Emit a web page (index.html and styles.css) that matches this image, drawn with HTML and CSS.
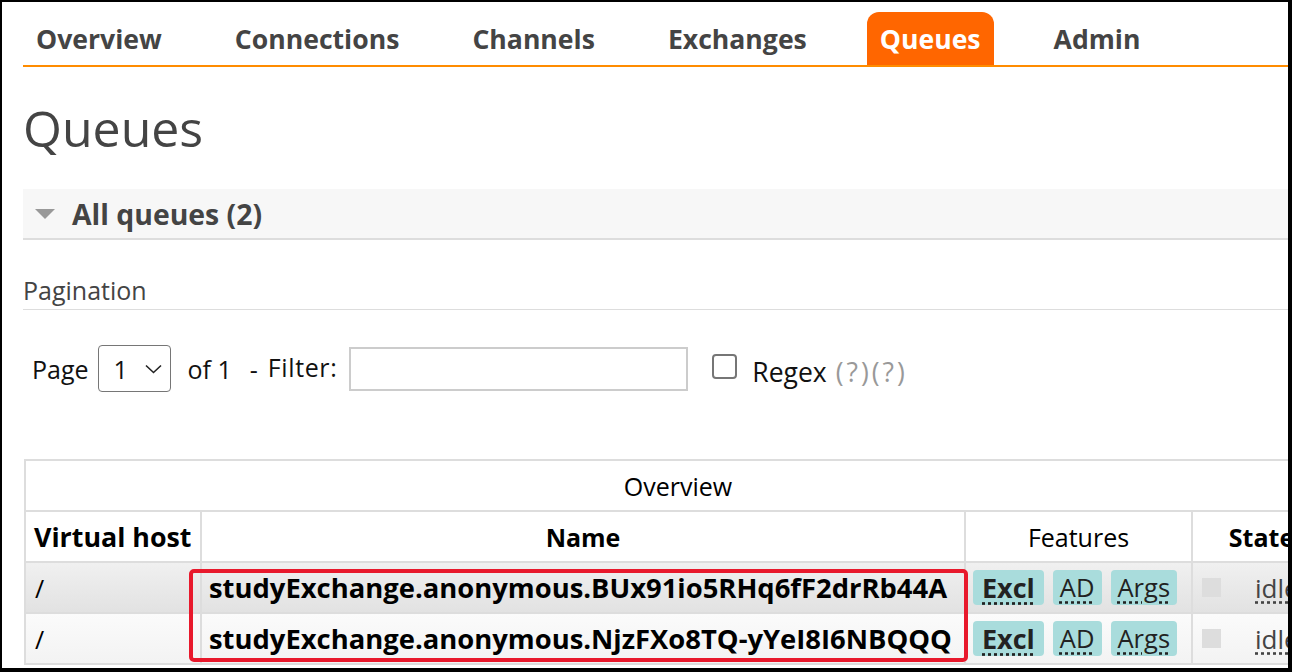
FILE: index.html
```html
<!DOCTYPE html>
<html lang="en">
<head>
<meta charset="utf-8">
<title>Queues</title>
<link rel="stylesheet" href="styles.css">
</head>
<body>
<div class="frame">
  <div class="page">
    <nav class="menu">
      <a class="tab">Overview</a>
      <a class="tab">Connections</a>
      <a class="tab">Channels</a>
      <a class="tab">Exchanges</a>
      <a class="tab active">Queues</a>
      <a class="tab">Admin</a>
    </nav>

    <h1 class="title">Queues</h1>

    <div class="section-head">
      <span class="tri"></span>
      <h2 class="section-title">All queues (2)</h2>
    </div>

    <h3 class="sub">Pagination</h3>

    <div class="pager">
      <span class="lbl">Page</span>
      <div class="select"><span class="sel-val">1</span><svg class="chev" width="17" height="10" viewBox="0 0 17 10"><path d="M1 1.5 L8.5 8.5 L16 1.5" fill="none" stroke="#222" stroke-width="1.6"/></svg></div>
      <span class="lbl of">of 1</span>
      <span class="lbl dash">-</span>
      <span class="lbl filter">Filter:</span>
      <div class="input"></div>
      <span class="checkbox"></span>
      <span class="lbl regex">Regex</span>
      <span class="help">(?)(?)</span>
    </div>

    <table class="list">
      <colgroup>
        <col class="c-vh">
        <col class="c-name">
        <col class="c-feat">
        <col class="c-state">
        <col class="c-more">
      </colgroup>
      <thead>
        <tr class="group">
          <th colspan="4">Overview</th>
          <th>Messages</th>
        </tr>
        <tr class="cols">
          <th class="left">Virtual host</th>
          <th>Name</th>
          <th class="normal">Features</th>
          <th>State</th>
          <th>Ready</th>
        </tr>
      </thead>
      <tbody>
        <tr class="alt1">
          <td>/</td>
          <td class="name">studyExchange.anonymous.BUx91io5RHq6fF2drRb44A</td>
          <td class="feat"><div class="badges"><span class="badge b">Excl</span><span class="badge">AD</span><span class="badge">Args</span></div></td>
          <td><div class="state"><span class="sq"></span><span class="idle">idle</span></div></td>
          <td>0</td>
        </tr>
        <tr class="alt2">
          <td>/</td>
          <td class="name">studyExchange.anonymous.NjzFXo8TQ-yYeI8I6NBQQQ</td>
          <td class="feat"><div class="badges"><span class="badge b">Excl</span><span class="badge">AD</span><span class="badge">Args</span></div></td>
          <td><div class="state"><span class="sq"></span><span class="idle">idle</span></div></td>
          <td>0</td>
        </tr>
      </tbody>
    </table>
  </div>
  <div class="highlight"></div>
</div>
</body>
</html>
```

FILE: styles.css
```css
html, body {
  margin: 0;
  padding: 0;
  background: #fff;
}

.frame {
  position: relative;
  box-sizing: border-box;
  width: 1292px;
  height: 672px;
  border-style: solid;
  border-color: #000;
  border-width: 2px 4px 4px 2px;
  overflow: hidden;
  font-family: "Open Sans", "Noto Sans", sans-serif;
  color: #444;
}

.page {
  width: 1500px;
  padding-left: 21px;
}

/* nav */
.menu {
  display: flex;
  margin-top: 10px;
  border-bottom: 2px solid #ff8c00;
}
.tab {
  display: block;
  height: 53px;
  line-height: 55px;
  padding: 0 13px;
  margin-right: 47px;
  font-size: 26.6px;
  font-weight: 700;
  color: #444;
  border-radius: 12px 12px 0 0;
}
.tab.active {
  background: #ff6600;
  color: #fff;
}

/* title */
.title {
  margin: 36px 0 0 0;
  font-size: 50px;
  line-height: 50px;
  font-weight: 400;
  color: #444;
}

/* section header */
.section-head {
  display: flex;
  align-items: center;
  margin-top: 36px;
  height: 49px;
  background: #f7f7f7;
  border-bottom: 2px solid #ddd;
  padding-left: 12px;
}
.tri {
  width: 0;
  height: 0;
  border-left: 10.5px solid transparent;
  border-right: 10.5px solid transparent;
  border-top: 10px solid #999;
  margin-right: 17px;
}
.section-title {
  margin: 0;
  font-size: 28.4px;
  font-weight: 700;
  color: #444;
}

/* pagination */
.sub {
  margin: 35px 0 0 0;
  font-size: 25px;
  font-weight: 400;
  line-height: 30px;
  padding-bottom: 4px;
  border-bottom: 1px solid #ddd;
  color: #444;
}

.pager {
  display: flex;
  align-items: center;
  margin-top: 35px;
  padding-left: 9px;
  font-size: 25px;
  color: #111;
}
.select {
  box-sizing: border-box;
  width: 73px;
  height: 47px;
  margin-left: 9px;
  border: 1.5px solid #767676;
  border-radius: 4px;
  display: flex;
  align-items: center;
  padding-left: 15px;
}
.sel-val {
  width: 31px;
}
.of {
  margin-left: 17px;
}
.dash {
  margin-left: 18px;
}
.filter {
  margin-left: 10px;
  letter-spacing: 0.6px;
  position: relative;
  top: -2px;
}
.input {
  box-sizing: border-box;
  width: 339px;
  height: 44px;
  margin-left: 12px;
  border: 2px solid #ccc;
}
.checkbox {
  box-sizing: border-box;
  width: 25px;
  height: 25px;
  margin-left: 24px;
  border: 2px solid #767676;
  border-radius: 4px;
  position: relative;
  top: -2px;
}
.regex {
  margin-left: 15px;
  font-size: 26.5px;
  position: relative;
  top: 3px;
}
.help {
  margin-left: 9px;
  color: #999;
  font-size: 26.5px;
  letter-spacing: 3px;
  position: relative;
  top: 3px;
}

/* table */
.list {
  margin-top: 67px;
  margin-left: 1px;
  border-collapse: collapse;
  table-layout: fixed;
  width: 1500px;
  border: 2px solid #ccc;
  color: #000;
  font-size: 25px;
}
.c-vh { width: 176px; }
.c-name { width: 764px; }
.c-feat { width: 227px; }
.c-state { width: 139px; }
.c-more { width: 194px; }

.list th,
.list td {
  height: 49px;
  padding: 0 9px;
  border: 2px solid #ddd;
  white-space: nowrap;
  overflow: hidden;
}
.list th {
  font-weight: 700;
  text-align: center;
}
.list .group th {
  font-weight: 400;
}
.list th.left {
  text-align: left;
  font-size: 26.8px;
  padding-left: 8px;
}
.list th.normal {
  font-weight: 400;
}
.list td {
  font-weight: 400;
}
.list td.name {
  font-weight: 700;
  font-size: 27.4px;
  padding-left: 7px;
}
.list td.feat {
  padding-left: 7px;
}
.alt1 td {
  background: linear-gradient(#f0f0f0, #e2e2e2);
}
.alt2 td {
  background: linear-gradient(#fbfbfb, #f3f3f3);
}

.badges {
  display: flex;
  gap: 9px;
}
.badge {
  height: 35px;
  line-height: 35px;
  padding: 0 7px;
  background: #a9dcdc;
  border-radius: 4px;
  color: #222;
  font-size: 25.5px;
  text-decoration: underline dotted #222;
  text-underline-offset: 4px;
}
.badge.b {
  font-weight: 700;
  font-size: 27px;
  padding: 0 9px;
}
.state {
  display: flex;
  align-items: center;
}
.sq {
  width: 19px;
  height: 19px;
  background: #ddd;
  margin-right: 34px;
}
.idle {
  color: #444;
  font-size: 26px;
  text-decoration: underline dotted #444;
  text-underline-offset: 4px;
}

/* annotation */
.highlight {
  position: absolute;
  left: 187px;
  top: 567px;
  width: 779px;
  height: 93px;
  box-sizing: border-box;
  border: 4px solid #e8192c;
  border-radius: 5px;
}
```
